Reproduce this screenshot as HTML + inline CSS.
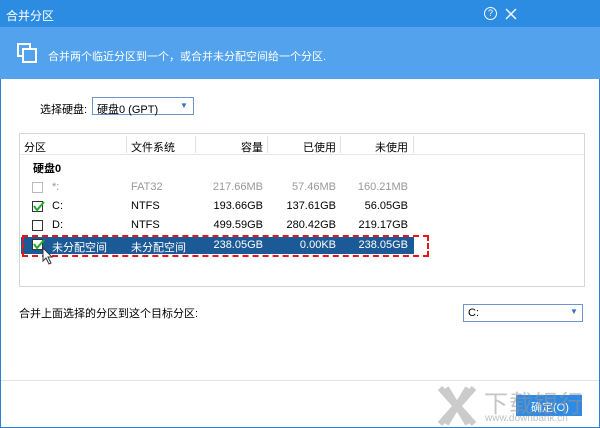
<!DOCTYPE html>
<html><head><meta charset="utf-8"><style>
*{margin:0;padding:0;box-sizing:border-box}
body{width:600px;height:428px;overflow:hidden;background:#fff;font-family:"Liberation Sans","Noto Sans CJK SC",sans-serif;font-size:11px;color:#000;position:relative}
.a{position:absolute;white-space:nowrap}
.r{text-align:right}
.cb{position:absolute;width:11px;height:11px;border:1px solid #333;background:#fff}
</style></head><body>
<div class="a" style="left:0;top:0;width:600px;height:428px;border:1px solid #2b7fd0"></div>
<div class="a" style="left:0;top:0;width:600px;height:27px;background:#2c8ce2"></div>
<div class="a" style="left:6px;top:7px;color:#fff;font-size:12px">合并分区</div>
<div class="a" style="left:484px;top:7px;width:13px;height:13px;border:1.5px solid #fff;border-radius:50%;color:#fff;font-size:9px;text-align:center;line-height:10px">?</div>
<svg class="a" style="left:505px;top:8px" width="12" height="12"><path d="M1 1L11 11M11 1L1 11" stroke="#fff" stroke-width="1.4"/></svg>
<div class="a" style="left:0;top:27px;width:600px;height:52px;background:#52a2ee"></div>
<div class="a" style="left:17px;top:43px;width:14px;height:14px;border:2px solid #fff"></div>
<div class="a" style="left:22px;top:48px;width:15px;height:15px;border:2px solid #fff;background:#52a2ee"></div>
<div class="a" style="left:48px;top:48px;color:#fff;font-size:11px">合并两个临近分区到一个，或合并未分配空间给一个分区.</div>
<div class="a" style="left:40px;top:101px">选择硬盘:</div>
<div class="a" style="left:92px;top:97px;width:102px;height:18px;border:1px solid #6e96cc"></div>
<div class="a" style="left:97px;top:101px">硬盘0 (GPT)</div>
<div class="a" style="left:180px;top:101px;color:#3a6fc0;font-size:8px">▼</div>
<div class="a" style="left:19px;top:133px;width:566px;height:154px;border:1px solid #d6d6d6"></div>
<div class="a" style="left:20px;top:134px;width:564px;height:21px;background:#fff;border-bottom:1px solid #e6e6e6"></div>
<div class="a" style="left:126px;top:136px;width:1px;height:17px;background:#e2e2e2"></div>
<div class="a" style="left:195px;top:136px;width:1px;height:17px;background:#e2e2e2"></div>
<div class="a" style="left:267px;top:136px;width:1px;height:17px;background:#e2e2e2"></div>
<div class="a" style="left:340px;top:136px;width:1px;height:17px;background:#e2e2e2"></div>
<div class="a" style="left:413px;top:136px;width:1px;height:17px;background:#e2e2e2"></div>
<div class="a" style="left:24px;top:139px">分区</div>
<div class="a" style="left:131px;top:139px">文件系统</div>
<div class="a r" style="left:200px;top:139px;width:63px">容量</div>
<div class="a r" style="left:270px;top:139px;width:66px">已使用</div>
<div class="a r" style="left:340px;top:139px;width:68px">未使用</div>
<div class="a" style="left:33px;top:160px;font-weight:bold">硬盘0</div>
<div class="cb" style="left:32px;top:182px;border-color:#bbb"></div>
<div class="a" style="left:52px;top:181px;color:#999">*:</div>
<div class="a" style="left:131px;top:181px;color:#999">FAT32</div>
<div class="a r" style="left:190px;top:181px;width:73px;color:#999">217.66MB</div>
<div class="a r" style="left:260px;top:181px;width:76px;color:#999">57.46MB</div>
<div class="a r" style="left:330px;top:181px;width:78px;color:#999">160.21MB</div>
<div class="cb" style="left:32px;top:201px"></div><svg class="a" style="left:33px;top:201px" width="12" height="11"><path d="M1 5L4 9L11 1" stroke="#1fae2e" stroke-width="2" fill="none"/></svg>
<div class="a" style="left:52px;top:200px">C:</div>
<div class="a" style="left:131px;top:200px">NTFS</div>
<div class="a r" style="left:190px;top:200px;width:73px">193.66GB</div>
<div class="a r" style="left:260px;top:200px;width:76px">137.61GB</div>
<div class="a r" style="left:330px;top:200px;width:78px">56.05GB</div>
<div class="cb" style="left:32px;top:220px"></div>
<div class="a" style="left:52px;top:219px">D:</div>
<div class="a" style="left:131px;top:219px">NTFS</div>
<div class="a r" style="left:190px;top:219px;width:73px">499.59GB</div>
<div class="a r" style="left:260px;top:219px;width:76px">280.42GB</div>
<div class="a r" style="left:330px;top:219px;width:78px">219.17GB</div>
<div class="a" style="left:21px;top:237px;width:393px;height:17px;background:#1b5a96"></div>
<div class="a" style="left:22px;top:235px;width:407px;height:22px;border:2px dashed #e8141c"></div>
<div class="cb" style="left:32px;top:239px"></div><svg class="a" style="left:33px;top:239px" width="12" height="11"><path d="M1 5L4 9L11 1" stroke="#1fae2e" stroke-width="2" fill="none"/></svg>
<div class="a" style="left:52px;top:239px;color:#fff">未分配空间</div>
<div class="a" style="left:131px;top:239px;color:#fff">未分配空间</div>
<div class="a r" style="left:190px;top:239px;width:73px;color:#fff">238.05GB</div>
<div class="a r" style="left:260px;top:239px;width:76px;color:#fff">0.00KB</div>
<div class="a r" style="left:330px;top:239px;width:78px;color:#fff">238.05GB</div>
<svg class="a" style="left:42px;top:247px" width="12" height="18"><path d="M1 1 L1 14 L4 11 L7 17 L9 16 L6 10 L10 10 Z" fill="#fff" stroke="#333"/></svg>
<div class="a" style="left:19px;top:305px">合并上面选择的分区到这个目标分区:</div>
<div class="a" style="left:463px;top:304px;width:120px;height:18px;border:1px solid #6e96cc"></div>
<div class="a" style="left:468px;top:307px">C:</div>
<div class="a" style="left:570px;top:307px;color:#3a6fc0;font-size:8px">▼</div>
<div class="a" style="left:1px;top:380px;width:598px;height:1px;background:#e3e3e3"></div>
<div class="a" style="left:516px;top:395px;width:66px;height:21px;background:#2f8ae4"></div>
<div class="a" style="left:531px;top:399px;color:#fff">确定(O)</div>
<svg class="a" style="left:436px;top:386px" width="42" height="40"><path d="M4 2L20 20L4 38M38 2L22 20L38 38M10 2L32 38M32 2L10 38" stroke="rgba(160,160,160,.55)" stroke-width="6" fill="none"/></svg>
<div class="a" style="left:484px;top:384px;color:rgba(150,150,150,.55);font-size:24px;letter-spacing:1px">下载银行</div>
<div class="a" style="left:485px;top:413px;color:rgba(150,150,150,.6);font-size:10px">www.downbank.cn</div>
</body></html>
